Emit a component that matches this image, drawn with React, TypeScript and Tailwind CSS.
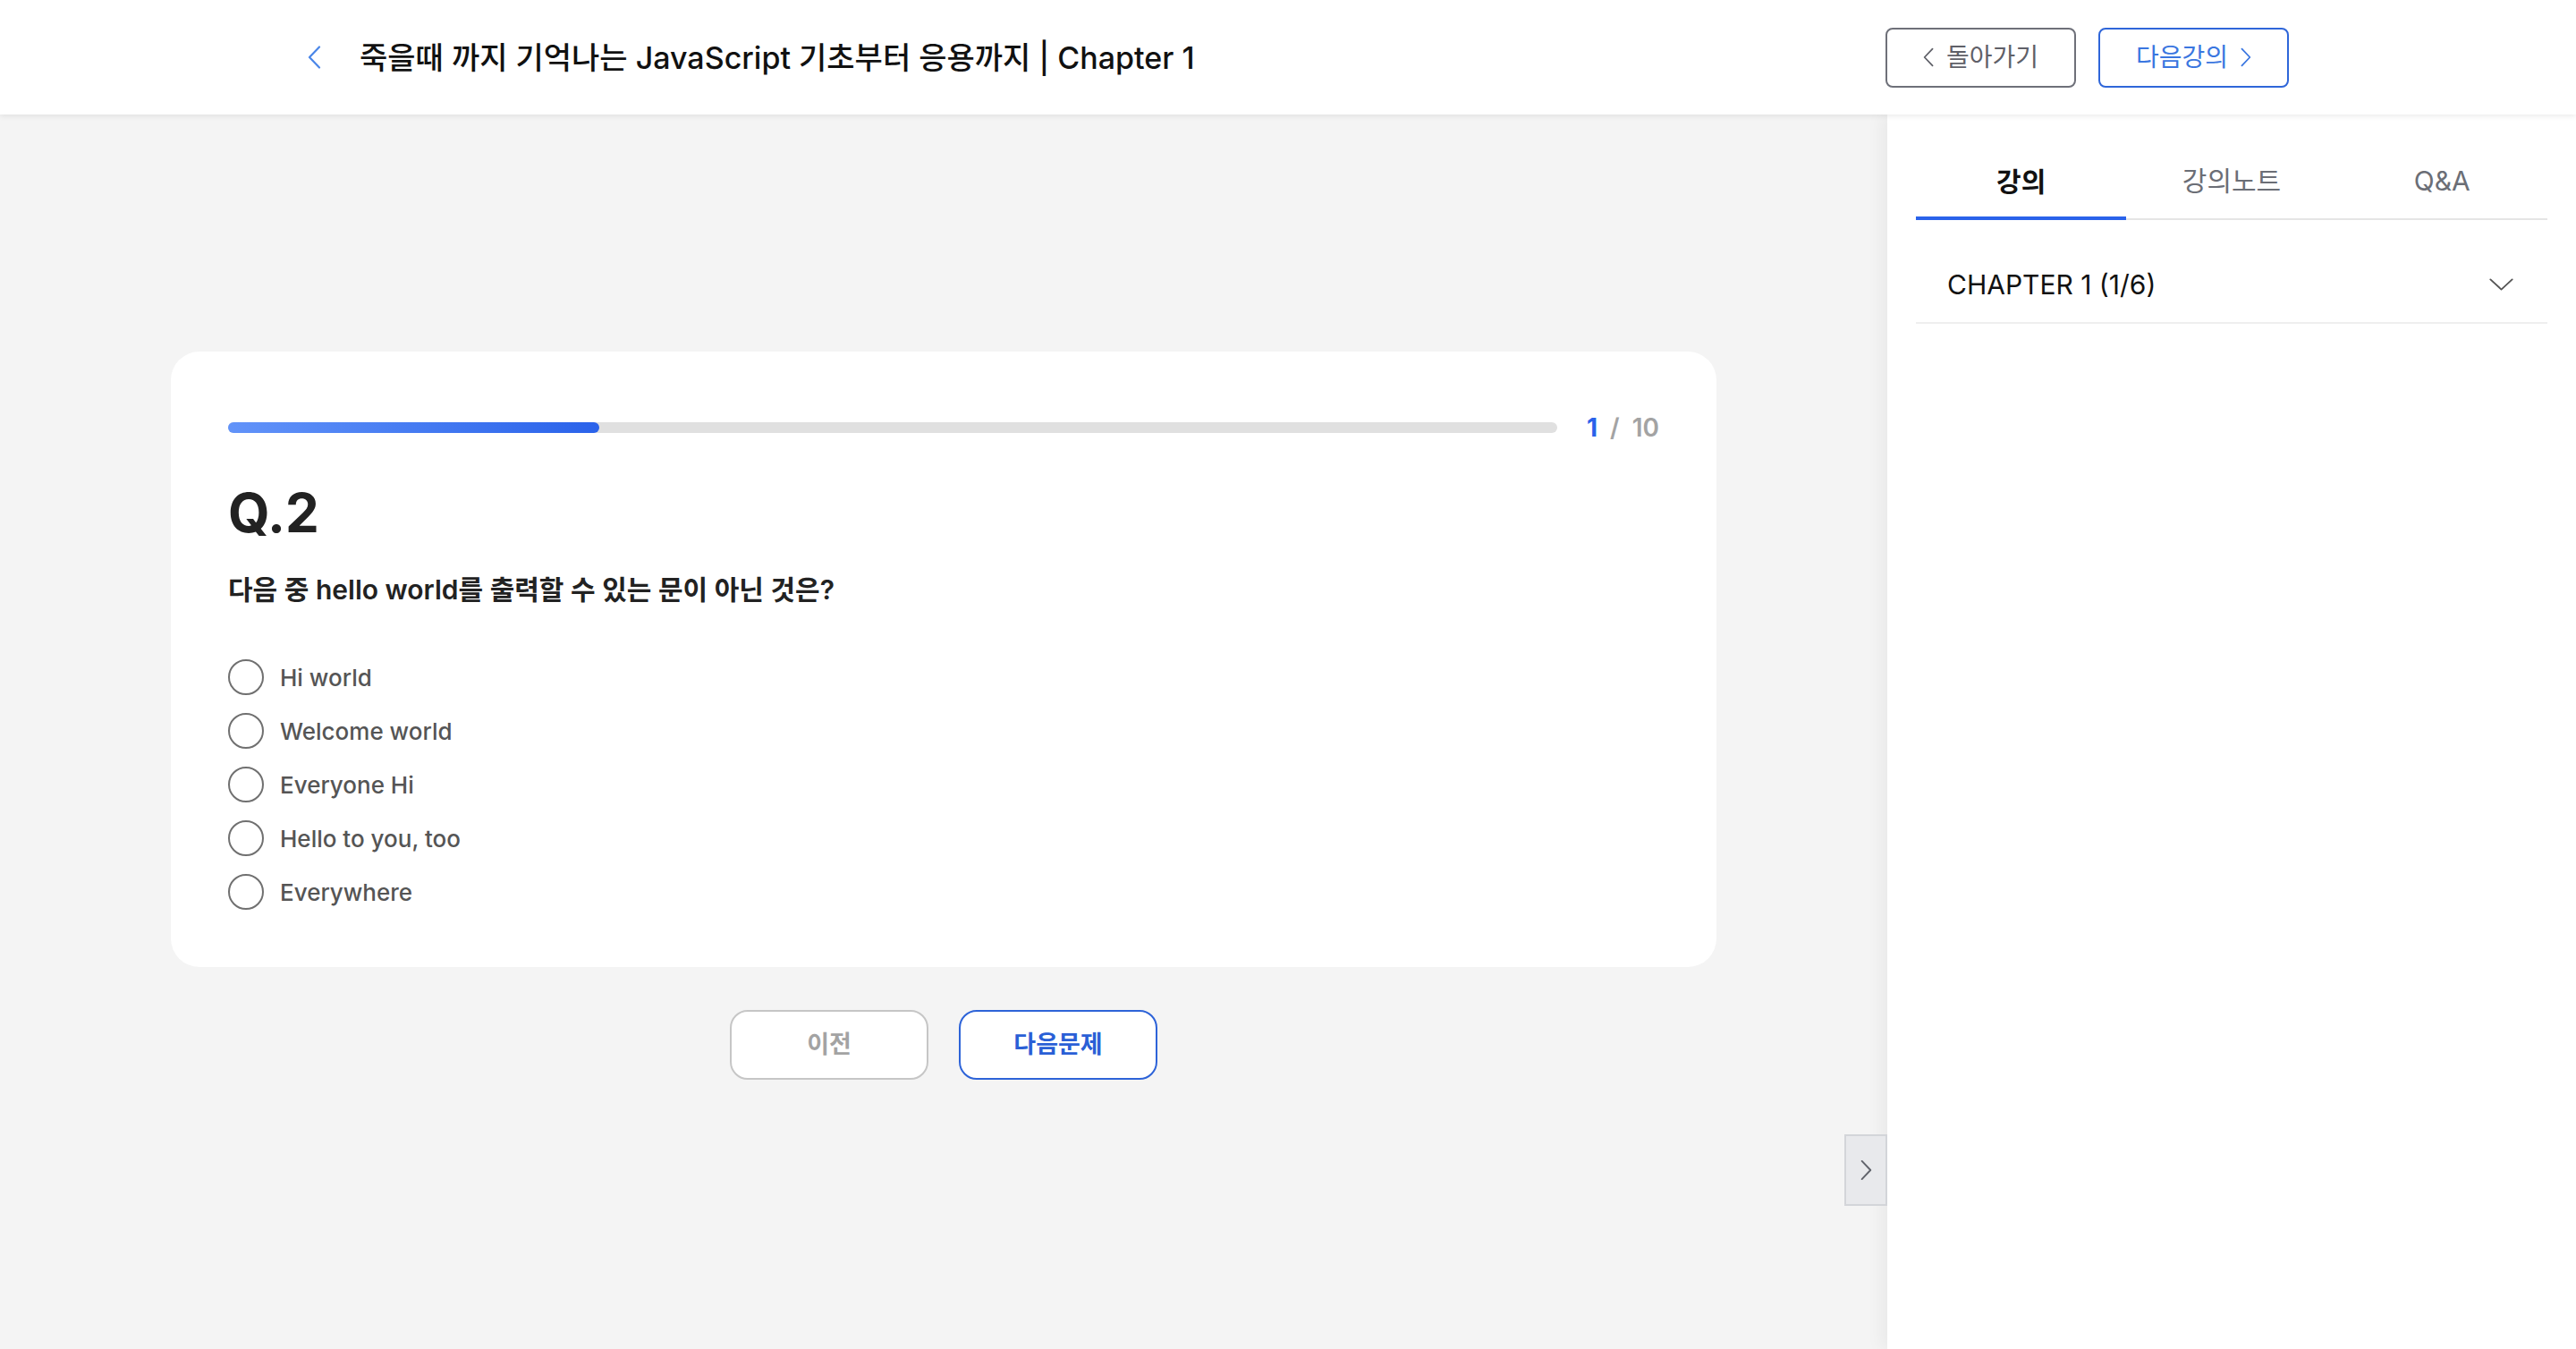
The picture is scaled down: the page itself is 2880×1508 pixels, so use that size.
const FONT = "font-['Inter','Noto_Sans_CJK_KR',sans-serif]";

const OPTIONS = ["Hi world", "Welcome world", "Everyone Hi", "Hello to you, too", "Everywhere"];

function Chevron({ dir, className }: { dir: "left" | "right" | "down"; className?: string }) {
  if (dir === "down") {
    return (
      <svg viewBox="0 0 28 15" className={className} fill="none" stroke="currentColor" strokeWidth="2" strokeLinecap="round" strokeLinejoin="round">
        <polyline points="1,1.5 14,13.5 27,1.5" />
      </svg>
    );
  }
  const pts = dir === "left" ? "13,1.5 2,13 13,24.5" : "3,1.5 14,13 3,24.5";
  return (
    <svg viewBox="0 0 16 26" className={className} fill="none" stroke="currentColor" strokeWidth="2.2" strokeLinecap="round" strokeLinejoin="round">
      <polyline points={pts} />
    </svg>
  );
}

function Header() {
  return (
    <header className="relative z-20 flex h-[128px] shrink-0 items-center justify-between bg-white pl-[344px] pr-[321px] shadow-[0_2px_6px_rgba(0,0,0,0.08)]">
      <div className="flex items-center gap-[42px]">
        <Chevron dir="left" className="h-[26px] w-[16px] text-[#4a86e8]" />
        <h1 className="text-[34px] font-medium text-[#111111]">
          죽을때 까지 기억나는 JavaScript 기초부터 응용까지 | Chapter 1
        </h1>
      </div>
      <div className="flex items-center gap-[25px]">
        <button className="flex h-[67px] w-[213px] items-center justify-center gap-[13px] rounded-[8px] border-2 border-[#6e7079] text-[28px] text-[#5f6068]">
          <Chevron dir="left" className="h-[22px] w-[13px]" />
          <span>돌아가기</span>
        </button>
        <button className="flex h-[67px] w-[213px] items-center justify-center gap-[13px] rounded-[8px] border-2 border-[#2f66d9] text-[28px] text-[#3a76e0]">
          <span>다음강의</span>
          <Chevron dir="right" className="h-[22px] w-[13px]" />
        </button>
      </div>
    </header>
  );
}

function QuizCard() {
  return (
    <div className="mx-auto w-[1728px] rounded-[32px] bg-white p-[64px]">
      <div className="flex h-[42px] items-center gap-[33px]">
        <div className="h-[12px] flex-1 rounded-full bg-[#e0e0e0]">
          <div className="h-full w-[415px] rounded-full bg-linear-to-r from-[#6293f9] to-[#2a62ea]" />
        </div>
        <div className="flex items-center gap-[14px] text-[28px] font-semibold text-[#a3a3a3]">
          <span className="font-bold text-[#2a62ea]">1</span>
          <span>/</span>
          <span>10</span>
        </div>
      </div>
      <h2 className="mt-[38px] text-[60px] font-bold leading-[72px] text-[#222222]">Q.2</h2>
      <p className="mt-[30px] text-[30px] font-semibold leading-[40px] text-[#222222]">
        다음 중 hello world를 출력할 수 있는 문이 아닌 것은?
      </p>
      <ul className="mt-[58px] flex flex-col gap-[20px]">
        {OPTIONS.map((opt) => (
          <li key={opt} className="flex h-[40px] items-center gap-[18px]">
            <span className="h-[40px] w-[40px] rounded-full border-2 border-[#707070]" />
            <span className="text-[26px] font-medium text-[#555555]">{opt}</span>
          </li>
        ))}
      </ul>
    </div>
  );
}

function Sidebar() {
  return (
    <aside className="relative z-10 w-[770px] shrink-0 bg-white px-[32px] pt-[32px] shadow-[-6px_0_18px_rgba(0,0,0,0.05)]">
      <div className="flex border-b-2 border-[#e5e5e5]">
        <div className="-mb-[2px] flex h-[86px] flex-1 items-center justify-center border-b-4 border-[#2a62ea] pt-[4px] text-[30px] font-bold text-[#111111]">
          강의
        </div>
        <div className="flex h-[84px] flex-1 items-center justify-center text-[30px] text-[#6b6e76]">강의노트</div>
        <div className="flex h-[84px] flex-1 items-center justify-center text-[30px] text-[#6b6e76]">Q&amp;A</div>
      </div>
      <div className="flex items-center justify-between border-b-2 border-[#efefef] pl-[35px] pr-[38px] pt-[50px] pb-[20px]">
        <span className="text-[30px] leading-[44px] text-[#111111]">CHAPTER 1 (1/6)</span>
        <Chevron dir="down" className="h-[14px] w-[27px] text-[#555555]" />
      </div>
    </aside>
  );
}

export default function App() {
  return (
    <div className={`${FONT} flex h-[1508px] w-[2880px] flex-col overflow-hidden bg-[#f4f4f4]`}>
      <Header />
      <div className="flex flex-1">
        <main className="relative flex-1 bg-[#f4f4f4] pt-[265px]">
          <QuizCard />
          <div className="mt-[48px] flex justify-center gap-[34px]">
            <button className="h-[78px] w-[222px] rounded-[20px] border-2 border-[#c6c6c6] bg-white text-[27px] font-bold text-[#a3a3a3]">
              이전
            </button>
            <button className="h-[78px] w-[222px] rounded-[20px] border-2 border-[#2d63d8] bg-white text-[27px] font-bold text-[#2a5fd6]">
              다음문제
            </button>
          </div>
          <button className="absolute right-0 top-[1140px] z-20 flex h-[80px] w-[48px] items-center justify-center border-2 border-[#d3d5d9] bg-[#e8e9ec] text-[#60636b]">
            <Chevron dir="right" className="h-[28px] w-[14px]" />
          </button>
        </main>
        <Sidebar />
      </div>
    </div>
  );
}
